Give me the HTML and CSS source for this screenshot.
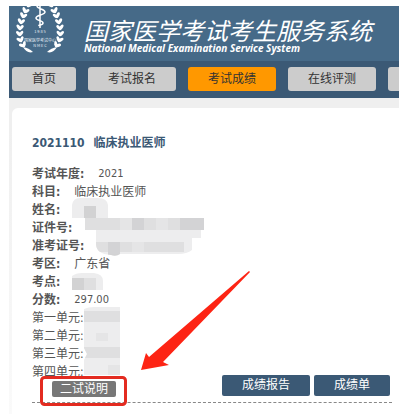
FILE: index.html
```html
<!DOCTYPE html>
<html lang="zh-CN">
<head>
<meta charset="utf-8">
<title>国家医学考试考生服务系统</title>
<link rel="stylesheet" href="styles.css">
</head>
<body>
<div class="page">
  <header class="banner">
    <svg class="logo" viewBox="0 0 52 50" aria-hidden="true">
      <defs>
        <g id="sprig">
          <ellipse cx="-2" cy="0" rx="3.2" ry="1.6" transform="rotate(52)"/>
          <ellipse cx="2" cy="0" rx="3" ry="1.5" transform="rotate(-48)"/>
        </g>
        <g id="branch">
          <use href="#sprig" transform="translate(13 0) rotate(24)"/>
          <use href="#sprig" transform="translate(10 6) rotate(20)"/>
          <use href="#sprig" transform="translate(8 11) rotate(14)"/>
          <use href="#sprig" transform="translate(6 17) rotate(8)"/>
          <use href="#sprig" transform="translate(5 23) rotate(2)"/>
          <use href="#sprig" transform="translate(5 29) rotate(-6)"/>
          <use href="#sprig" transform="translate(6 35) rotate(-20)"/>
          <use href="#sprig" transform="translate(9 40) rotate(-35)"/>
          <path d="M8 41Q14 42 18 46Q12 48 8 41Z"/>
        </g>
      </defs>
      <g class="logo-fill">
        <use href="#branch" transform="translate(1 0)"/>
        <use href="#branch" transform="translate(51 0) scale(-1 1)"/>
      </g>
      <path class="logo-line" d="M26 0V22M23 0C23 3 31 3 31 6S22 9 22 12S29 14 29 17S24 18 25 20"/>
      <text class="logo-text" x="26" y="27">1 9 8 5</text>
      <text class="logo-text" x="26" y="36">国家医学考试中心</text>
      <text class="logo-text" x="26" y="41">N M E C</text>
    </svg>
    <div class="brand">
      <h1 class="brand-name">国家医学考试考生服务系统</h1>
      <p class="brand-sub">National Medical Examination Service System</p>
    </div>
  </header>
  <nav class="nav">
    <a class="tab tab-home" href="#">首页</a>
    <a class="tab" href="#">考试报名</a>
    <a class="tab tab-active" href="#">考试成绩</a>
    <a class="tab" href="#">在线评测</a>
    <a class="tab" href="#" aria-label="更多"></a>
  </nav>
  <main class="card">
    <h2 class="exam"><span>2021110</span><span>临床执业医师</span></h2>
    <dl class="info">
      <div class="row"><dt>考试年度:</dt><dd class="num">2021</dd></div>
      <div class="row"><dt>科目:</dt><dd>临床执业医师</dd></div>
      <div class="row"><dt>姓名:</dt><dd></dd></div>
      <div class="row"><dt>证件号:</dt><dd></dd></div>
      <div class="row"><dt>准考证号:</dt><dd></dd></div>
      <div class="row"><dt>考区:</dt><dd>广东省</dd></div>
      <div class="row"><dt>考点:</dt><dd></dd></div>
      <div class="row"><dt>分数:</dt><dd class="num">297.00</dd></div>
      <div class="row unit"><dt>第一单元:</dt><dd></dd></div>
      <div class="row unit"><dt>第二单元:</dt><dd></dd></div>
      <div class="row unit"><dt>第三单元:</dt><dd></dd></div>
      <div class="row unit"><dt>第四单元:</dt><dd></dd></div>
    </dl>
    <div class="actions">
      <button class="note" type="button">二试说明</button>
      <button class="report" type="button">成绩报告</button>
      <button class="report sheet" type="button">成绩单</button>
    </div>
    <svg class="marks" viewBox="0 0 389 306" aria-hidden="true">
      <defs>
        <clipPath id="blobs">
          <path d="M60 97Q61 90 68 90H86Q95 90 96 97V110H192V122H189V130H180V142Q175 146 166 146H108Q104 149 99 147Q84 146 84 136V122H73V110H60ZM60 168Q64 165 70 165H82Q91 166 91 173V182H60ZM72 201Q76 199 82 199H108V267H72V252L75 246L72 240Z"/>
        </clipPath>
      </defs>
      <g clip-path="url(#blobs)">
        <path fill="#ededee" d="M60 88H192V150H60ZM60 164H92V184H60ZM72 198H108V268H72Z"/>
        <path fill="#d2d2d3" d="M72 98H84V110H72ZM96 142H108V150H96ZM60 170H72V182H60Z"/>
        <path fill="#dfdfe0" d="M72 110H192V122H72ZM84 134H172V144H84ZM72 170H84V182H72ZM72 203H84V214H72ZM84 203H108V214H84ZM72 239H108V250H72Z"/>
        <path fill="#d3d3d5" d="M120 110H132V122H120ZM168 110H192V122H168ZM96 134H108V146H96Z"/>
        <path fill="#e5e5e6" d="M108 110H120V122H108ZM144 110H156V122H144ZM120 134H132V144H120ZM84 225H96V233H84ZM96 257H108V267H96Z"/>
      </g>
      <path fill="#fd2414" d="M237 163L238 164L151 254L157 257L129 262L134 245L137 249Z"/>
      <rect class="frame" x="29.5" y="269.5" width="84" height="27" rx="3"/>
    </svg>
  </main>
</div>
</body>
</html>
```
FILE: styles.css
```css
* { box-sizing: border-box; }

body {
  margin: 0;
  background: #fff;
  color: #555;
  font-family: "DejaVu Sans Condensed", "Noto Sans CJK SC", sans-serif;
  font-size: 12px;
}

.page {
  margin: 6px 2px 0 9px;
  background: linear-gradient(#efefef 30%, #fafafa);
}

.banner {
  display: flex;
  gap: 18px;
  height: 55px;
  padding-left: 5px;
  background: #466a88;
  color: #fff;
}

.logo { flex: none; width: 52px; height: 50px; }
.logo-fill { fill: #fff; }
.logo-line { fill: none; stroke: #fff; stroke-width: 1.5; }
.logo-text {
  fill: #e4edf4;
  font-family: "Noto Sans CJK SC", sans-serif;
  font-size: 4px;
  text-anchor: middle;
}

.brand { padding-top: 12px; white-space: nowrap; }
.brand-name {
  margin: 0;
  font: italic 400 24px/24px "Noto Sans CJK SC", sans-serif;
}
.brand-sub {
  margin: 0;
  font: italic 700 10px/12px "Noto Sans", sans-serif;
}

.nav {
  display: flex;
  gap: 12px;
  padding: 6px 0 7px 3px;
  background: #3b5975;
  overflow: hidden;
}
.tab {
  flex: none;
  width: 88px;
  height: 24px;
  border-radius: 3px;
  background: #ccc;
  color: #333;
  line-height: 24px;
  text-align: center;
  text-decoration: none;
}
.tab-home { width: 64px; }
.tab-active { background: #ff9800; }

.card {
  position: relative;
  margin: 10px 0 0 3px;
  padding: 25px 7px 12px 20px;
  border-radius: 6px 0 0 0;
  background: #fff;
}
.exam {
  display: flex;
  gap: 9px;
  margin: 0 0 12px;
  color: #3b5975;
  font-size: 12px;
  line-height: 20px;
}
.info { margin: 0 0 -6px; }
.row { display: flex; gap: 14px; height: 18px; line-height: 18px; }
.row dt { font-weight: 700; }
.row dd { margin: 0; }
.row .num { font-size: 11px; }
.unit dt { font-weight: 400; }

.actions {
  display: flex;
  align-items: flex-start;
  gap: 4px;
  height: 28px;
  padding-right: 2px;
  border-bottom: 1px dashed #888;
}
.actions button {
  padding: 0;
  border: 0;
  border-radius: 2px;
  color: #fff;
  font: inherit;
}
.actions .note {
  width: 64px;
  height: 16px;
  margin: 6px auto 0 20px;
  background: #777;
  line-height: 16px;
}
.actions .report {
  width: 88px;
  height: 21px;
  background: #3b5975;
  line-height: 21px;
}
.actions .sheet { width: 76px; }

.marks {
  position: absolute;
  top: 0;
  left: 0;
  width: 389px;
  height: 306px;
  pointer-events: none;
}
.frame { fill: none; stroke: #e32b20; stroke-width: 3; }
```
